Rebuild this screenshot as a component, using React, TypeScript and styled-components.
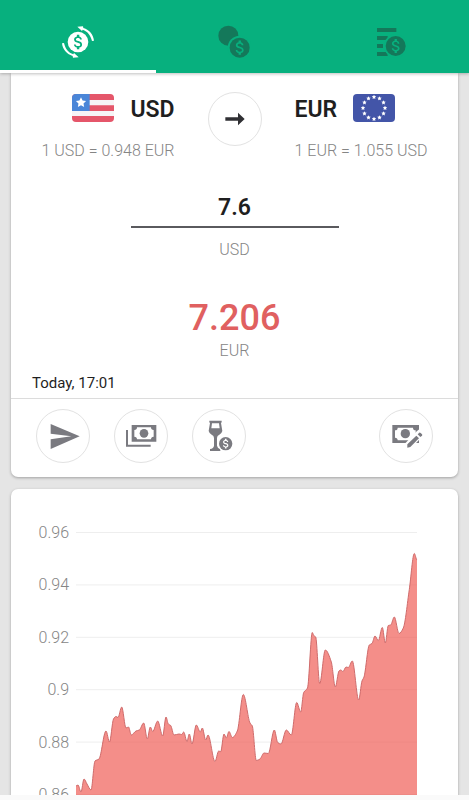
import React, { useId, useState } from "react";
import styled, { createGlobalStyle, css } from "styled-components";

const GlobalStyle = createGlobalStyle`
  *, *::before, *::after { box-sizing: border-box; }
  body {
    margin: 0;
    background: #e5e5e5;
    font-family: Roboto, "Liberation Sans", sans-serif;
    color: #1f1f1f;
  }
  button, input { font: inherit; color: inherit; }
`;

const Screen = styled.div`
  display: flex;
  flex-direction: column;
  height: 100vh;
  overflow: hidden;
`;

const TabBar = styled.nav`
  display: grid;
  grid-template-columns: repeat(3, 1fr);
  flex: none;
  height: 73px;
  background: #07b07e;
  box-shadow: 0 1px 3px rgba(0, 0, 0, 0.25);
  z-index: 1;
`;

const Tab = styled.button<{ $active?: boolean }>`
  display: flex;
  justify-content: center;
  align-items: flex-end;
  padding: 0 0 11px;
  border: 0;
  border-bottom: 3px solid ${(p) => (p.$active ? "#fff" : "transparent")};
  background: none;
  color: ${(p) => (p.$active ? "#fff" : "#14785a")};
`;

const Content = styled.main`
  flex: 1;
  min-height: 0;
  overflow: hidden;
  padding: 0 11px;
`;

const cardShadow = css`
  background: #fff;
  box-shadow: 0 1px 3px rgba(0, 0, 0, 0.3);
`;

const ConverterCard = styled.section`
  ${cardShadow}
  border-radius: 0 0 7px 7px;
`;

const ChartCard = styled.section`
  ${cardShadow}
  margin-top: 12px;
  padding: 33px 41px 40px 22px;
  border-radius: 7px;
`;

const PairRow = styled.div`
  display: grid;
  grid-template-columns: 1fr 54px 1fr;
  column-gap: 33px;
  height: 88px;
  padding-top: 19px;
`;

const Side = styled.div<{ $align: "start" | "end" }>`
  display: flex;
  flex-direction: column;
  align-items: flex-${(p) => p.$align};
  gap: 18px;
  padding-top: 2px;
`;

const Currency = styled.button`
  display: flex;
  align-items: center;
  gap: 16px;
  height: 28px;
  padding: 0;
  border: 0;
  background: none;
`;

const Code = styled.span`
  padding-top: 3px;
  font-size: 23px;
  line-height: 28px;
  font-weight: 600;
`;

const Muted = styled.span`
  font-size: 16px;
  line-height: 22px;
  font-weight: 300;
  color: #858585;
  white-space: nowrap;
`;

const RoundButton = styled.button`
  display: grid;
  place-items: center;
  width: 54px;
  height: 54px;
  padding: 0;
  border: 1px solid #e2e2e2;
  border-radius: 50%;
  background: #fff;
  color: #7a7a80;
`;

const SwapButton = styled(RoundButton)`
  color: #303034;
`;

const AmountForm = styled.div`
  display: flex;
  flex-direction: column;
  align-items: center;
  padding-top: 28px;
`;

const AmountInput = styled.input`
  width: 208px;
  height: 39px;
  margin-bottom: 11px;
  padding: 0 0 1px;
  border: 0;
  border-bottom: 2px solid #5a5a5e;
  outline: 0;
  background: none;
  text-align: center;
  font-size: 23px;
  font-weight: 600;
`;

const Result = styled.output`
  margin: 35px 0 0;
  font-size: 36px;
  line-height: 44px;
  font-weight: 500;
  color: #e06060;
`;

const Updated = styled.p`
  margin: 11px 0 5px;
  padding: 0 21px;
  font-size: 15px;
  line-height: 20px;
`;

const Actions = styled.div`
  display: flex;
  gap: 24px;
  padding: 10px 25px 14px;
  border-top: 1px solid #dcdcdc;

  & > :last-child { margin-left: auto; }
`;

const Chart = styled.figure`
  display: grid;
  grid-template-columns: 36px 1fr;
  column-gap: 7px;
  height: 284px;
  margin: 0;
`;

const AxisLabels = styled.div`
  display: flex;
  flex-direction: column;
  justify-content: space-between;
  align-items: flex-end;
`;

const Plot = styled.svg`
  display: block;
  width: 100%;
  height: 262px;
  margin-top: 10px;
  overflow: visible;
`;

const BottomStrip = styled.div`
  flex: none;
  height: 5px;
  background: #fafafa;
  z-index: 1;
`;

const Svg = styled.svg`
  display: block;
  width: 34px;
  height: 34px;
`;

const FlagSvg = styled.svg`
  display: block;
  width: 42px;
  height: 28px;
`;

const DOLLAR =
  "M11.8 10.9c-2.27-.59-3-1.2-3-2.15 0-1.09 1.01-1.85 2.7-1.85 1.78 0 2.44.85 2.5 2.1h2.21c-.07-1.72-1.12-3.3-3.21-3.81V3h-3v2.16c-1.94.42-3.5 1.68-3.5 3.61 0 2.31 1.91 3.46 4.7 4.13 2.5.6 3 1.48 3 2.41 0 .69-.49 1.79-2.7 1.79-2.06 0-2.87-.92-2.98-2.1h-2.2c.12 2.19 1.76 3.42 3.68 3.83V21h3v-2.15c1.95-.37 3.5-1.5 3.5-3.55 0-2.84-2.43-3.81-4.7-4.4z";

type CoinProps = { cx: number; cy: number; r: number; sign: string; scale: number };

function Coin({ cx, cy, r, sign, scale }: CoinProps) {
  return (
    <>
      <circle cx={cx} cy={cy} r={r} fill="currentColor" />
      <path
        d={DOLLAR}
        fill={sign}
        transform={`translate(${cx - 11.4 * scale} ${cy - 12 * scale}) scale(${scale})`}
      />
    </>
  );
}

function ExchangeIcon() {
  const arrow = "M99 47C97 29 86 15 67 9L66 4 49 5 63 18 65 14C80 19 89 31 93 48Z";
  return (
    <Svg viewBox="0 0 102 102" aria-hidden="true">
      <path d={arrow} fill="currentColor" />
      <path d={arrow} fill="currentColor" transform="rotate(180 51 51)" />
      <Coin cx={51} cy={51} r={31} sign="#07b07e" scale={2.4} />
    </Svg>
  );
}

function CoinsIcon() {
  return (
    <Svg viewBox="0 0 102 102" aria-hidden="true">
      <circle cx="34" cy="32" r="30" fill="currentColor" />
      <circle cx="68" cy="68" r="36" fill="#07b07e" />
      <Coin cx={68} cy={68} r={30} sign="#07b07e" scale={2.35} />
    </Svg>
  );
}

function CoinListIcon() {
  return (
    <Svg viewBox="0 0 102 102" aria-hidden="true">
      <path d="M9 33h32v12H9zM9 57h18v12H9zM9 81h32v12H9z" fill="currentColor" />
      <circle cx="65" cy="63" r="35" fill="#07b07e" />
      <path d="M9 9h58v12H9z" fill="currentColor" />
      <Coin cx={65} cy={63} r={30} sign="#07b07e" scale={2.3} />
    </Svg>
  );
}

function ArrowIcon() {
  return (
    <Svg viewBox="0 0 102 102" aria-hidden="true">
      <path d="M22 46H60V32L80 51 60 70V56H22Z" fill="currentColor" />
    </Svg>
  );
}

function SendIcon() {
  return (
    <Svg viewBox="0 0 102 102" aria-hidden="true">
      <path d="M14 15L101 52 14 90V61L76 52 14 44Z" fill="currentColor" />
    </Svg>
  );
}

function BillsIcon() {
  return (
    <Svg viewBox="0 0 102 102" aria-hidden="true">
      <path d="M6 33h6v44h68v6H6z" fill="currentColor" />
      <path
        fillRule="evenodd"
        fill="currentColor"
        d="M23 18h74v50H23zM39 25q0 8-8 8v20q8 0 8 8h42q0-8 8-8V33q-8 0-8-8z"
      />
      <circle cx="60" cy="43" r="13" fill="currentColor" />
    </Svg>
  );
}

function GlassIcon() {
  return (
    <Svg viewBox="0 0 102 102" aria-hidden="true">
      <path
        fillRule="evenodd"
        fill="currentColor"
        d="M22 5H59V10L57 12 61 36Q59 44 52 47 45 50 45 57V80Q46 88 55 90V96H24V90Q35 88 36 80V57Q36 50 29 47 22 44 20 36L24 12 22 10ZM30 13L28 28H53L51 13Z"
      />
      <circle cx="71" cy="74" r="24" fill="#fff" />
      <Coin cx={71} cy={74} r={20} sign="#fff" scale={1.6} />
    </Svg>
  );
}

function BillEditIcon() {
  return (
    <Svg viewBox="0 0 102 102" aria-hidden="true">
      <path
        fillRule="evenodd"
        fill="currentColor"
        d="M10 18h80v54H10zM26 26q0 8-8 8v22q8 0 8 8h46q0-8 8-8V34q-8 0-8-8z"
      />
      <circle cx="49" cy="44" r="14" fill="currentColor" />
      <path d="M46 92V76L84 36 92 30 106 46 62 92Z" fill="#fff" />
      <path d="M55 76L82 50 90 58 64 84 55 86Z" fill="currentColor" />
      <path d="M86 46L91 41Q93 40 95 42L99 46Q101 48 99 50L94 54Z" fill="currentColor" />
    </Svg>
  );
}

function starPoints(cx: number, cy: number, r: number) {
  return Array.from({ length: 10 }, (_, i) => {
    const radius = i % 2 ? r * 0.5 : r;
    const angle = (i * Math.PI) / 5 - Math.PI / 2;
    return `${cx + radius * Math.cos(angle)},${cy + radius * Math.sin(angle)}`;
  }).join(" ");
}

function UsFlag() {
  const clip = useId();
  return (
    <FlagSvg viewBox="0 0 126 84" aria-hidden="true">
      <clipPath id={clip}>
        <rect width="126" height="84" rx="12" />
      </clipPath>
      <g clipPath={`url(#${clip})`}>
        <rect width="126" height="84" fill="#e5566a" />
        <path d="M0 18h126v16H0zM0 51h126v15H0z" fill="#f6f4f6" />
        <rect width="53" height="51" fill="#4a86d8" />
        <polygon points={starPoints(27, 26, 16)} fill="#fff" />
      </g>
    </FlagSvg>
  );
}

function EuFlag() {
  return (
    <FlagSvg viewBox="0 0 126 84" aria-hidden="true">
      <rect width="126" height="84" rx="12" fill="#4355a8" />
      {Array.from({ length: 12 }, (_, i) => {
        const a = (i * Math.PI) / 6;
        return (
          <polygon
            key={i}
            points={starPoints(63 + 33 * Math.cos(a), 42 + 33 * Math.sin(a), 7)}
            fill="#fff"
          />
        );
      })}
    </FlagSvg>
  );
}

const TICKS = ["0.96", "0.94", "0.92", "0.9", "0.88", "0.86"];

// Turning points of the rate curve: [x, y] on a 341 x 262 plot, 0.96 at y = 0.
const RATE_POINTS: [number, number][] = [
  [0, 254], [2, 253], [5, 260], [8, 247], [11, 252], [15, 258], [19, 229], [23, 227],
  [30, 199], [33.5, 210], [37.5, 187], [40, 184.5], [42, 185.5], [45.7, 175], [50, 196],
  [52.5, 195], [55.3, 203], [60, 199], [63.3, 198], [67.7, 191], [71.3, 207], [74.3, 195],
  [76.7, 199.5], [81.7, 189], [86.7, 204], [90, 185], [92.3, 192], [94.7, 193.5], [98, 203],
  [103, 202], [105.7, 202.5], [107.7, 200], [111, 209.5], [113.3, 202], [116, 212],
  [120.3, 193], [124.3, 200], [126.3, 196], [129.7, 208], [132, 203], [139, 229.5],
  [142.7, 219], [144.7, 219.7], [148, 202], [150.3, 206], [153, 199.5], [156.3, 205.5],
  [161.3, 199], [167.3, 162.5], [174, 191], [176.3, 194], [180.3, 228.5], [184, 227],
  [188, 221], [192.3, 221.5], [198.3, 198], [201.7, 210.5], [205, 212], [210.3, 198],
  [215.3, 203], [220.7, 170.5], [224.7, 180], [227.7, 160.5], [231.5, 156], [236.3, 100.5],
  [237.7, 103.5], [239.7, 105], [243.7, 151.5], [249.3, 118], [255.3, 130], [259.3, 155],
  [263, 139], [264.7, 138], [267, 139.5], [270, 135], [272.3, 135.5], [276.3, 129],
  [282.7, 168], [286, 149], [288, 145], [293.3, 113], [296, 111.5], [299, 104], [302.3, 108.5],
  [306.3, 95.5], [309.3, 111], [312.3, 93.5], [314.7, 93], [318.3, 85], [323, 101.5],
  [327.3, 96], [333.3, 57.5], [338.3, 21.5], [341, 28],
];

// Monotone cubic curve through the points, so that no peak overshoots.
function smoothPath(points: [number, number][]) {
  const slope = (i: number) =>
    (points[i + 1][1] - points[i][1]) / (points[i + 1][0] - points[i][0]);
  const tangent = points.map((_, i) => {
    if (i === 0 || i === points.length - 1) return 0;
    const a = slope(i - 1);
    const b = slope(i);
    return a * b <= 0 ? 0 : (2 * a * b) / (a + b);
  });
  let d = `M${points[0][0]} ${points[0][1]}`;
  for (let i = 0; i < points.length - 1; i++) {
    const [x0, y0] = points[i];
    const [x1, y1] = points[i + 1];
    const h = (x1 - x0) / 3;
    d += `C${x0 + h} ${y0 + tangent[i] * h} ${x1 - h} ${y1 - tangent[i + 1] * h} ${x1} ${y1}`;
  }
  return d;
}

function RateChart() {
  const line = smoothPath(RATE_POINTS);
  return (
    <Chart aria-label="USD to EUR rate history">
      <AxisLabels>
        {TICKS.map((tick) => (
          <Muted key={tick}>{tick}</Muted>
        ))}
      </AxisLabels>
      <Plot viewBox="0 0 341 262" preserveAspectRatio="none" aria-hidden="true">
        {TICKS.map((tick, i) => (
          <path
            key={tick}
            d={`M0 ${i * 52.4 + 0.5}H341`}
            stroke="#eeeeee"
            vectorEffect="non-scaling-stroke"
          />
        ))}
        <path d={`${line}V263H0Z`} fill="#ee4f47" fillOpacity="0.64" />
        <path
          d={line}
          fill="none"
          stroke="#cf6b6b"
          strokeWidth="1"
          vectorEffect="non-scaling-stroke"
        />
      </Plot>
    </Chart>
  );
}

export default function App() {
  const [amount, setAmount] = useState("7.6");
  const value = Number(amount);
  const result = Number.isFinite(value) ? (value * 0.94816).toFixed(3) : "";

  return (
    <Screen>
      <GlobalStyle />
      <TabBar>
        <Tab $active aria-label="Convert" aria-current="page"><ExchangeIcon /></Tab>
        <Tab aria-label="Currencies"><CoinsIcon /></Tab>
        <Tab aria-label="Rate list"><CoinListIcon /></Tab>
      </TabBar>
      <Content>
        <ConverterCard>
          <PairRow>
            <Side $align="end">
              <Currency><UsFlag /><Code>USD</Code></Currency>
              <Muted>1 USD = 0.948 EUR</Muted>
            </Side>
            <SwapButton aria-label="Swap currencies"><ArrowIcon /></SwapButton>
            <Side $align="start">
              <Currency><Code>EUR</Code><EuFlag /></Currency>
              <Muted>1 EUR = 1.055 USD</Muted>
            </Side>
          </PairRow>
          <AmountForm>
            <AmountInput
              id="amount"
              inputMode="decimal"
              value={amount}
              onChange={(e) => setAmount(e.target.value)}
            />
            <Muted as="label" htmlFor="amount">USD</Muted>
            <Result htmlFor="amount">{result}</Result>
            <Muted>EUR</Muted>
          </AmountForm>
          <Updated>Today, 17:01</Updated>
          <Actions>
            <RoundButton aria-label="Send"><SendIcon /></RoundButton>
            <RoundButton aria-label="Cash"><BillsIcon /></RoundButton>
            <RoundButton aria-label="Tip"><GlassIcon /></RoundButton>
            <RoundButton aria-label="Edit rate"><BillEditIcon /></RoundButton>
          </Actions>
        </ConverterCard>
        <ChartCard>
          <RateChart />
        </ChartCard>
      </Content>
      <BottomStrip />
    </Screen>
  );
}
